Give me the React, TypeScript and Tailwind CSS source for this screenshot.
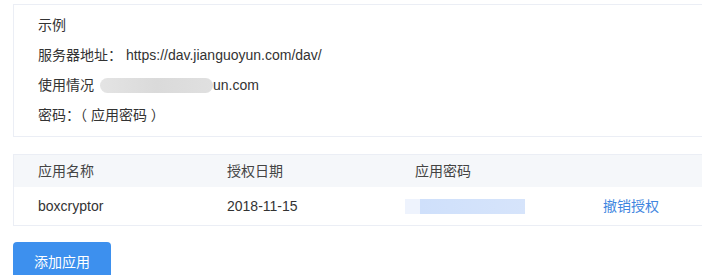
import React from 'react'

const rows = [{ name: 'boxcryptor', date: '2018-11-15' }]

export default function App() {
  return (
    <div className="w-[702px] h-[275px] overflow-hidden bg-white pl-[13px] pt-[4px] text-[14px] text-[#333] font-['Liberation_Sans','Noto_Sans_CJK_SC',sans-serif]">
      <div className="w-[720px] border border-[#ebeef5] pl-[24px] pt-[5px] pb-[6px]">
        <div className="h-[30px] leading-[30px]">示例</div>
        <div className="h-[30px] leading-[30px]">服务器地址： https://dav.jianguoyun.com/dav/</div>
        <div className="h-[30px] leading-[30px] flex items-center">
          <span>使用情况</span>
          <span className="ml-[6px] h-[15px] w-[113px] rounded-full bg-gradient-to-r from-[#e4e4e4] via-[#dadada] to-[#e0e0e0]" />
          <span>un.com</span>
        </div>
        <div className="h-[30px] leading-[30px]">密码：（ 应用密码 ）</div>
      </div>

      <div className="mt-[17px] w-[720px] border border-[#ebeef5]">
        <div className="flex h-[32px] items-center bg-[#f5f7fa] text-[#444]">
          <div className="w-[213px] pl-[24px]">应用名称</div>
          <div className="w-[188px]">授权日期</div>
          <div className="w-[188px]">应用密码</div>
        </div>
        {rows.map((r) => (
          <div key={r.name} className="flex h-[38px] items-center">
            <div className="w-[213px] pl-[24px]">{r.name}</div>
            <div className="w-[188px]">{r.date}</div>
            <div className="w-[188px] flex items-center">
              <span className="-ml-[10px] h-[15px] w-[15px] bg-[#eef3fd]" />
              <span className="h-[15px] w-[105px] bg-gradient-to-r from-[#cfe0fb] to-[#d6e4fb]" />
            </div>
            <div className="text-[#3f86e0]">撤销授权</div>
          </div>
        ))}
      </div>

      <button className="mt-[16px] h-[40px] w-[98px] rounded-[4px] bg-[#3d90ee] pb-[2px] pt-[2px] text-[14px] text-white">
        添加应用
      </button>
    </div>
  )
}
